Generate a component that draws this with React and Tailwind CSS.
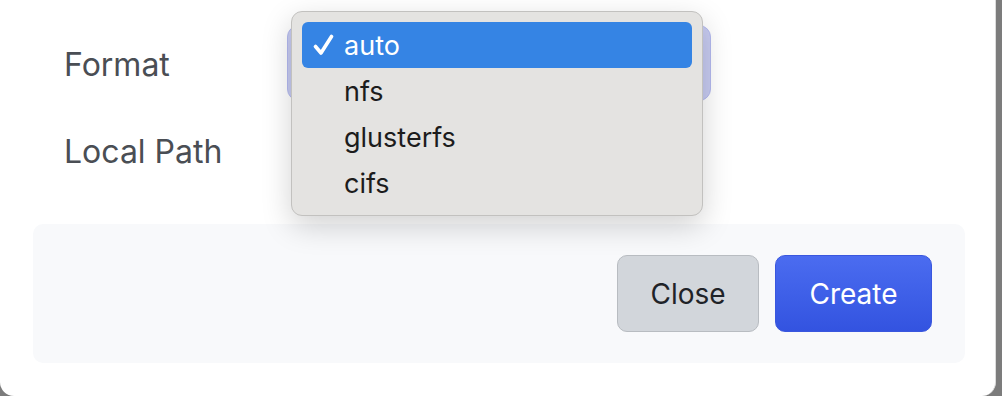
import React from 'react';

const options = ['auto', 'nfs', 'glusterfs', 'cifs'];

const FormRow = ({ label, children }) => (
    <div className="flex items-center h-[74px]">
        <div className="w-[222px] pl-[64px] box-content text-[32px] leading-none text-[#4a4e54] pt-[3px]">{label}</div>
        {children}
    </div>
);

export default function App() {
    return (
        <div className="w-[1002px] h-[396px] bg-[#7c7c7c] overflow-hidden" style={{ fontFamily: 'Inter, "Noto Sans", sans-serif' }}>
            <div className="relative w-[996px] h-[396px] bg-white rounded-b-[14px] border-r border-[#dcdcdc]">
                {/* form */}
                <div className="pt-[26px] flex flex-col gap-[13px]">
                    <FormRow label="Format">
                        <div className="ml-[1px] w-[424px] h-[76px] rounded-[12px] bg-[#c7cbf1] border border-[#b3b9ef]" />
                    </FormRow>
                    <FormRow label="Local Path">
                        <div className="ml-[8px] w-[409px] h-[74px] rounded-[10px] bg-white border border-[#8a8a8a]" />
                    </FormRow>
                </div>

                {/* footer */}
                <div className="ml-[33px] mr-[30px] mt-[37px] h-[139px] rounded-[10px] bg-[#f8f9fb] flex items-center justify-end gap-[16px] pr-[33px]">
                    <button className="w-[142px] h-[77px] rounded-[10px] bg-[#d2d6db] border border-[#b8bcc1] text-[28px] text-[#1f2328]">
                        Close
                    </button>
                    <button className="w-[157px] h-[77px] rounded-[10px] bg-gradient-to-b from-[#4b6cf0] to-[#3353e0] border border-[#3a57de] text-[28px] text-white">
                        Create
                    </button>
                </div>

                {/* open select menu */}
                <div className="absolute left-[291px] top-[11px] w-[412px] h-[205px] rounded-[11px] bg-[#e4e3e1] border border-[#c2c1bf] shadow-[0_10px_30px_rgba(0,0,0,0.18)] px-[10px] pt-[10px]">
                    {options.map((o, i) => (
                        <div
                            key={o}
                            className={
                                i === 0
                                    ? 'flex items-center h-[46px] rounded-[6px] bg-[#3584e4] text-white text-[27px]'
                                    : 'flex items-center h-[46px] text-[#1c1c1c] text-[27px]'
                            }
                        >
                            <span className="w-[42px] pl-[11px] flex items-center">
                                {i === 0 && (
                                    <svg width="21" height="22" viewBox="0 0 21 22" fill="none">
                                        <path d="M2.5 12.5 L8 19 L18.5 2.5" stroke="white" strokeWidth="3.6" strokeLinecap="round" strokeLinejoin="round" />
                                    </svg>
                                )}
                            </span>
                            <span className="leading-none">{o}</span>
                        </div>
                    ))}
                </div>
            </div>
        </div>
    );
}
